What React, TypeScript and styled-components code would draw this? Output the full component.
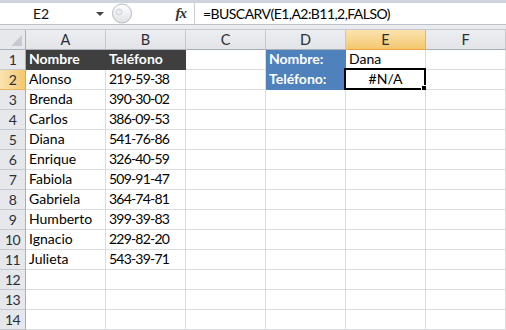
import styled, { createGlobalStyle } from "styled-components"

const GlobalStyle = createGlobalStyle`
  html, body {
    margin: 0;
    padding: 0;
    background: #ffffff;
  }
  body {
    font-family: Lato, "Open Sans", sans-serif;
    overflow: hidden;
  }
`

const Window = styled.div`
  width: 506px;
  height: 330px;
  overflow: hidden;
  background: #fff;
`

const FormulaBar = styled.div`
  height: 30px;
  box-sizing: border-box;
  background: #e9ebef;
  border-top: 3px solid #cfd4dc;
  border-bottom: 1px solid #c4c8ce;
  display: flex;
  flex-direction: column;
`

const BarRow = styled.div`
  height: 21px;
  display: flex;
  background: #fff;
  border-bottom: 1px solid #bcc2ca;
`

const NameBox = styled.div`
  width: 110px;
  display: flex;
  align-items: center;
  font-size: 14px;
  color: #111;
`

const NameText = styled.span`
  flex: 1;
  text-align: center;
  padding-right: 14px;
`

const DropArrow = styled.span`
  width: 0;
  height: 0;
  border-left: 4px solid transparent;
  border-right: 4px solid transparent;
  border-top: 4px solid #444;
  margin-right: 6px;
`

const Splitter = styled.div`
  width: 24px;
  display: flex;
  align-items: center;
  justify-content: center;
`

const FxArea = styled.div`
  flex: 0 0 61px;
  display: flex;
  align-items: center;
  justify-content: flex-end;
  padding-right: 8px;
  box-sizing: border-box;
  font-family: "Liberation Serif", serif;
  font-style: italic;
  font-weight: bold;
  font-size: 15px;
  color: #333;
  letter-spacing: -1px;
  border-right: 1px solid #c9ced4;
`

const FormulaInput = styled.div`
  flex: 1;
  display: flex;
  align-items: center;
  padding-left: 8px;
  font-size: 14px;
  letter-spacing: -0.55px;
  color: #000;
`

const Sheet = styled.div`
  display: grid;
  grid-template-columns: 26px repeat(6, 80px);
  grid-auto-rows: 20px;
`

const Corner = styled.div`
  background: #e6e8ec;
  border-right: 1px solid #a9b0b8;
  border-bottom: 1px solid #a9b0b8;
  box-sizing: border-box;
  display: flex;
  align-items: flex-end;
  justify-content: flex-end;
  padding: 0 3px 3px 0;
`

const ColHeader = styled.div<{ $selected?: boolean }>`
  box-sizing: border-box;
  background: ${p => p.$selected ? "linear-gradient(#fbe3b0, #f3c86d)" : "linear-gradient(#eceef1, #e2e4e8)"};
  border-right: 1px solid ${p => p.$selected ? "#e3b45a" : "#c4c9d0"};
  border-bottom: 1px solid ${p => p.$selected ? "#f0a33c" : "#a9b0b8"};
  display: flex;
  align-items: center;
  justify-content: center;
  font-size: 14.5px;
  color: #2b2f36;
`

const RowHeader = styled.div<{ $selected?: boolean }>`
  box-sizing: border-box;
  background: ${p => p.$selected ? "linear-gradient(90deg, #fbe3b0, #f3c86d)" : "#e6e8ec"};
  border-right: 1px solid ${p => p.$selected ? "#f0a33c" : "#a9b0b8"};
  border-bottom: 1px solid ${p => p.$selected ? "#e3b45a" : "#c4c9d0"};
  display: flex;
  align-items: center;
  justify-content: center;
  font-size: 14px;
  letter-spacing: -0.5px;
  color: #2b2f36;
`

const Cell = styled.div<{ $fill?: string; $bold?: boolean; $center?: boolean; $digits?: boolean }>`
  position: relative;
  box-sizing: border-box;
  background: ${p => p.$fill || "#fff"};
  color: ${p => p.$fill ? "#fff" : "#000"};
  font-weight: ${p => p.$bold ? 700 : 400};
  border-right: 1px solid ${p => p.$fill || "#dadcdd"};
  border-bottom: 1px solid ${p => p.$fill || "#dadcdd"};
  display: flex;
  align-items: flex-end;
  justify-content: ${p => p.$center ? "center" : "flex-start"};
  padding: 0 3px 1px;
  font-size: 14px;
  letter-spacing: ${p => p.$digits ? "-0.8px" : "0"};
  line-height: 18px;
  white-space: nowrap;
`

const Selection = styled.div`
  position: absolute;
  left: -2px;
  top: -2px;
  right: -1px;
  bottom: -1px;
  border: 2px solid #000;
  pointer-events: none;
`

const FillHandle = styled.div`
  position: absolute;
  right: -4px;
  bottom: -4px;
  width: 5px;
  height: 5px;
  background: #000;
  border: 1px solid #fff;
`

const people: [string, string][] = [
  ["Alonso", "219-59-38"],
  ["Brenda", "390-30-02"],
  ["Carlos", "386-09-53"],
  ["Diana", "541-76-86"],
  ["Enrique", "326-40-59"],
  ["Fabiola", "509-91-47"],
  ["Gabriela", "364-74-81"],
  ["Humberto", "399-39-83"],
  ["Ignacio", "229-82-20"],
  ["Julieta", "543-39-71"],
]

const cols = ["A", "B", "C", "D", "E", "F"]

type CellData = { text?: string; fill?: string; bold?: boolean; center?: boolean; digits?: boolean }

function cellAt(row: number, col: string): CellData {
  if (row === 1 && col === "A") return { text: "Nombre", fill: "#3f3f3f", bold: true }
  if (row === 1 && col === "B") return { text: "Teléfono", fill: "#3f3f3f", bold: true }
  if (row === 1 && col === "D") return { text: "Nombre:", fill: "#4f81bd", bold: true }
  if (row === 2 && col === "D") return { text: "Teléfono:", fill: "#4f81bd", bold: true }
  if (row === 1 && col === "E") return { text: "Dana" }
  if (row === 2 && col === "E") return { text: "#N/A", center: true }
  const p = people[row - 2]
  if (p && col === "A") return { text: p[0] }
  if (p && col === "B") return { text: p[1], digits: true }
  return {}
}

export default function App() {
  const rows = Array.from({ length: 14 }, (_, i) => i + 1)
  return (
    <Window>
      <GlobalStyle />
      <FormulaBar>
        <BarRow>
          <NameBox>
            <NameText>E2</NameText>
            <DropArrow />
          </NameBox>
          <Splitter>
            <svg width="22" height="21" viewBox="0 0 22 21">
              <defs>
                <linearGradient id="knob" x1="0" y1="0" x2="0" y2="1">
                  <stop offset="0" stopColor="#ffffff" />
                  <stop offset="1" stopColor="#dfe2e6" />
                </linearGradient>
              </defs>
              <circle cx="11" cy="10.5" r="9.5" fill="url(#knob)" stroke="#b4bac2" />
              <circle cx="8" cy="9" r="3" fill="#e8eaee" stroke="#d0d4da" />
            </svg>
          </Splitter>
          <FxArea>fx</FxArea>
          <FormulaInput>=BUSCARV(E1,A2:B11,2,FALSO)</FormulaInput>
        </BarRow>
      </FormulaBar>
      <Sheet>
        <Corner>
          <svg width="11" height="11" viewBox="0 0 11 11">
            <polygon points="11,0 11,11 0,11" fill="#c5cad1" />
          </svg>
        </Corner>
        {cols.map(c => (
          <ColHeader key={c} $selected={c === "E"}>{c}</ColHeader>
        ))}
        {rows.map(r => [
          <RowHeader key={"h" + r} $selected={r === 2}>{r}</RowHeader>,
          ...cols.map(c => {
            const d = cellAt(r, c)
            const active = r === 2 && c === "E"
            return (
              <Cell key={c + r} $fill={d.fill} $bold={d.bold} $center={d.center} $digits={d.digits}>
                {d.text}
                {active && (
                  <Selection>
                    <FillHandle />
                  </Selection>
                )}
              </Cell>
            )
          }),
        ])}
      </Sheet>
    </Window>
  )
}
